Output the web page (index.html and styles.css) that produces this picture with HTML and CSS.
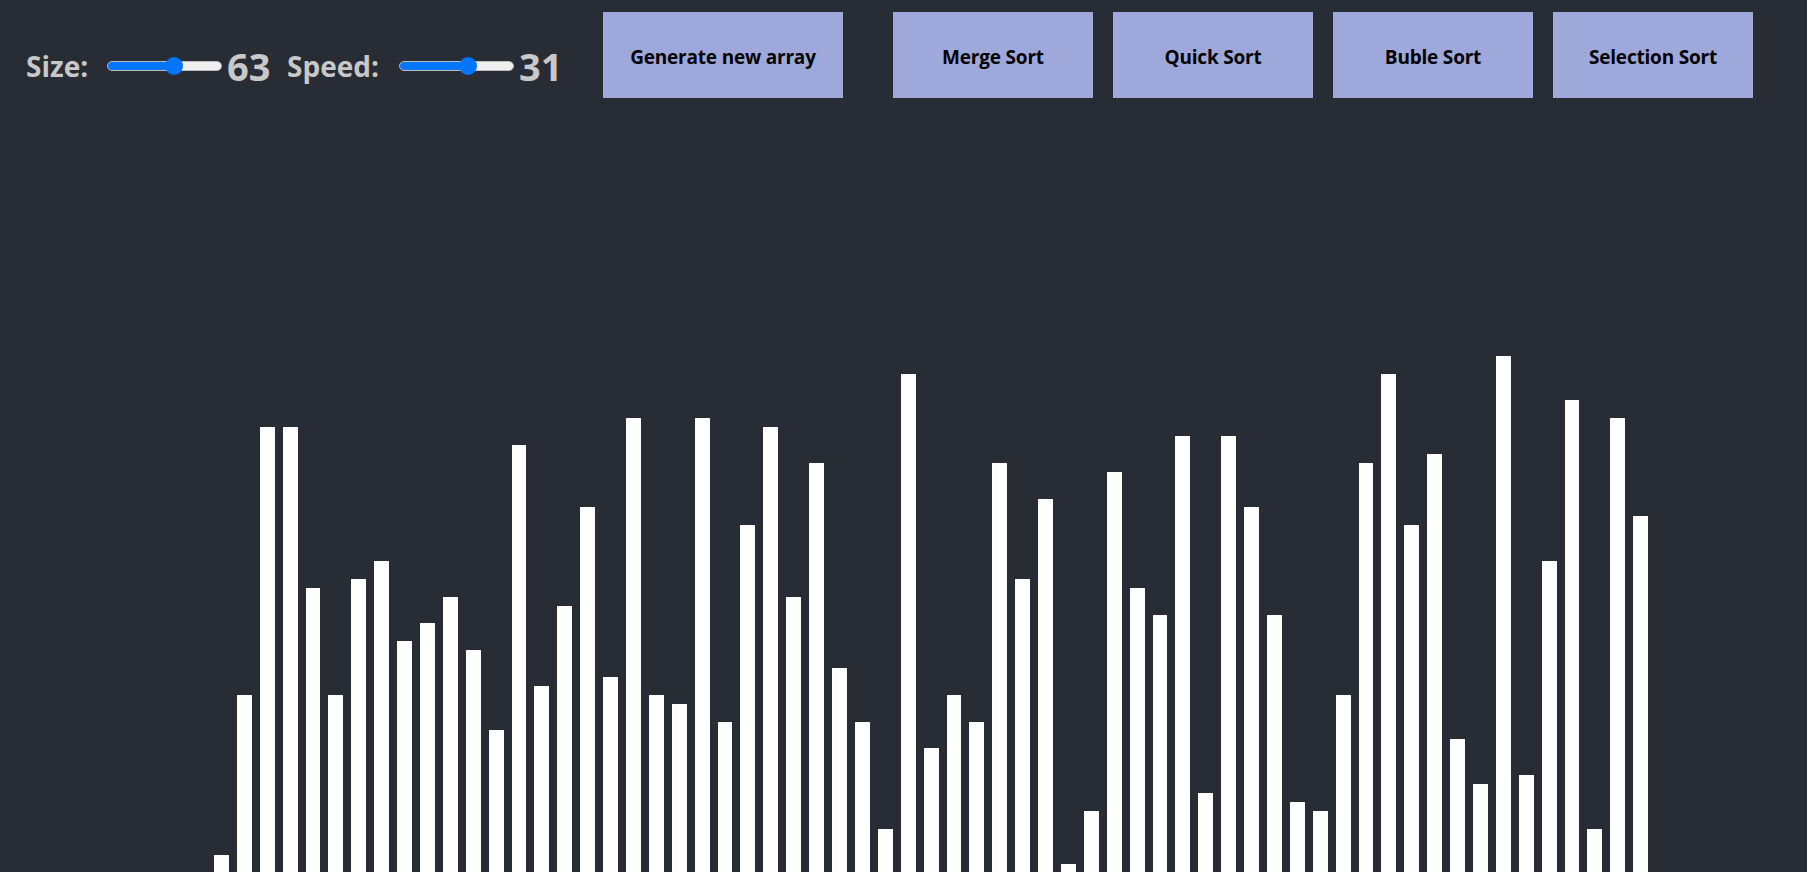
FILE: index.html
```html
<!DOCTYPE html>
<html lang="en">
<head>
<meta charset="utf-8">
<title>Sorting Visualizer</title>
<link rel="stylesheet" href="styles.css">
</head>
<body>
<div class="app">
  <header class="toolbar">
    <div class="controls">
      <span class="label label-size">Size:</span>
      <input class="range" type="range" min="5" max="101" value="63" style="--fill: 59%">
      <span class="value value-size">63</span>
      <span class="label label-speed">Speed:</span>
      <input class="range" type="range" min="1" max="49" value="31" style="--fill: 61%">
      <span class="value">31</span>
    </div>
    <button class="btn btn-generate">Generate new array</button>
    <div class="sorts">
      <button class="btn btn-sort">Merge Sort</button>
      <button class="btn btn-sort">Quick Sort</button>
      <button class="btn btn-sort">Buble Sort</button>
      <button class="btn btn-sort">Selection Sort</button>
    </div>
  </header>
  <main class="bars">
    <div class="bar" style="height:17px"></div>
    <div class="bar" style="height:177px"></div>
    <div class="bar" style="height:445px"></div>
    <div class="bar" style="height:445px"></div>
    <div class="bar" style="height:284px"></div>
    <div class="bar" style="height:177px"></div>
    <div class="bar" style="height:293px"></div>
    <div class="bar" style="height:311px"></div>
    <div class="bar" style="height:231px"></div>
    <div class="bar" style="height:249px"></div>
    <div class="bar" style="height:275px"></div>
    <div class="bar" style="height:222px"></div>
    <div class="bar" style="height:142px"></div>
    <div class="bar" style="height:427px"></div>
    <div class="bar" style="height:186px"></div>
    <div class="bar" style="height:266px"></div>
    <div class="bar" style="height:365px"></div>
    <div class="bar" style="height:195px"></div>
    <div class="bar" style="height:454px"></div>
    <div class="bar" style="height:177px"></div>
    <div class="bar" style="height:168px"></div>
    <div class="bar" style="height:454px"></div>
    <div class="bar" style="height:150px"></div>
    <div class="bar" style="height:347px"></div>
    <div class="bar" style="height:445px"></div>
    <div class="bar" style="height:275px"></div>
    <div class="bar" style="height:409px"></div>
    <div class="bar" style="height:204px"></div>
    <div class="bar" style="height:150px"></div>
    <div class="bar" style="height:43px"></div>
    <div class="bar" style="height:498px"></div>
    <div class="bar" style="height:124px"></div>
    <div class="bar" style="height:177px"></div>
    <div class="bar" style="height:150px"></div>
    <div class="bar" style="height:409px"></div>
    <div class="bar" style="height:293px"></div>
    <div class="bar" style="height:373px"></div>
    <div class="bar" style="height:8px"></div>
    <div class="bar" style="height:61px"></div>
    <div class="bar" style="height:400px"></div>
    <div class="bar" style="height:284px"></div>
    <div class="bar" style="height:257px"></div>
    <div class="bar" style="height:436px"></div>
    <div class="bar" style="height:79px"></div>
    <div class="bar" style="height:436px"></div>
    <div class="bar" style="height:365px"></div>
    <div class="bar" style="height:257px"></div>
    <div class="bar" style="height:70px"></div>
    <div class="bar" style="height:61px"></div>
    <div class="bar" style="height:177px"></div>
    <div class="bar" style="height:409px"></div>
    <div class="bar" style="height:498px"></div>
    <div class="bar" style="height:347px"></div>
    <div class="bar" style="height:418px"></div>
    <div class="bar" style="height:133px"></div>
    <div class="bar" style="height:88px"></div>
    <div class="bar" style="height:516px"></div>
    <div class="bar" style="height:97px"></div>
    <div class="bar" style="height:311px"></div>
    <div class="bar" style="height:472px"></div>
    <div class="bar" style="height:43px"></div>
    <div class="bar" style="height:454px"></div>
    <div class="bar" style="height:356px"></div>
  </main>
</div>
</body>
</html>
```
FILE: styles.css
```css
* {
  box-sizing: border-box;
}

html, body {
  margin: 0;
  padding: 0;
  height: 100%;
  overflow: hidden;
  background: #282c34;
}

body {
  font-family: "Open Sans", "Noto Sans", "Liberation Sans", sans-serif;
}

.app {
  height: 100vh;
  display: flex;
  flex-direction: column;
}

.toolbar {
  display: flex;
  align-items: flex-start;
  padding: 12px 0 0 26px;
  flex: none;
}

.controls {
  width: 577px;
  height: 52px;
  margin-top: 28px;
  display: flex;
  align-items: center;
  color: #c8c8c8;
  font-weight: 700;
}

.label {
  font-size: 28px;
  line-height: 38px;
}

.label-size {
  width: 81px;
}

.label-speed {
  width: 112px;
}

.value {
  font-size: 38px;
  line-height: 52px;
  padding-left: 5px;
}

.value-size {
  width: 65px;
}

.range {
  -webkit-appearance: none;
  appearance: none;
  width: 115px;
  height: 18px;
  margin: 0;
  padding: 0;
  background: transparent;
  flex: none;
}

.range::-webkit-slider-runnable-track {
  height: 10px;
  border-radius: 5px;
  border: 1px solid #bdbdbd;
  background: linear-gradient(to right, #0075ff 0, #0075ff var(--fill), #efefef var(--fill), #efefef 100%);
}

.range::-webkit-slider-thumb {
  -webkit-appearance: none;
  appearance: none;
  width: 18px;
  height: 18px;
  border-radius: 50%;
  background: #0075ff;
  border: none;
  margin-top: -5px;
}

.btn {
  height: 86px;
  border: none;
  border-radius: 0;
  margin: 0;
  background: #9fa8da;
  color: #000;
  font-family: "Open Sans", "Noto Sans", "Liberation Sans", sans-serif;
  font-weight: 700;
  font-size: 19px;
  letter-spacing: -0.2px;
  padding: 3px 0 0;
  display: flex;
  align-items: center;
  justify-content: center;
  flex: none;
}

.btn-generate {
  width: 240px;
}

.sorts {
  display: flex;
  gap: 20px;
  margin-left: 50px;
}

.btn-sort {
  width: 200px;
}

.bars {
  flex: 1;
  display: flex;
  align-items: flex-end;
  gap: 8px;
  padding-left: 214px;
}

.bar {
  width: 14.9px;
  flex: none;
  background: #ffffff;
}
```
